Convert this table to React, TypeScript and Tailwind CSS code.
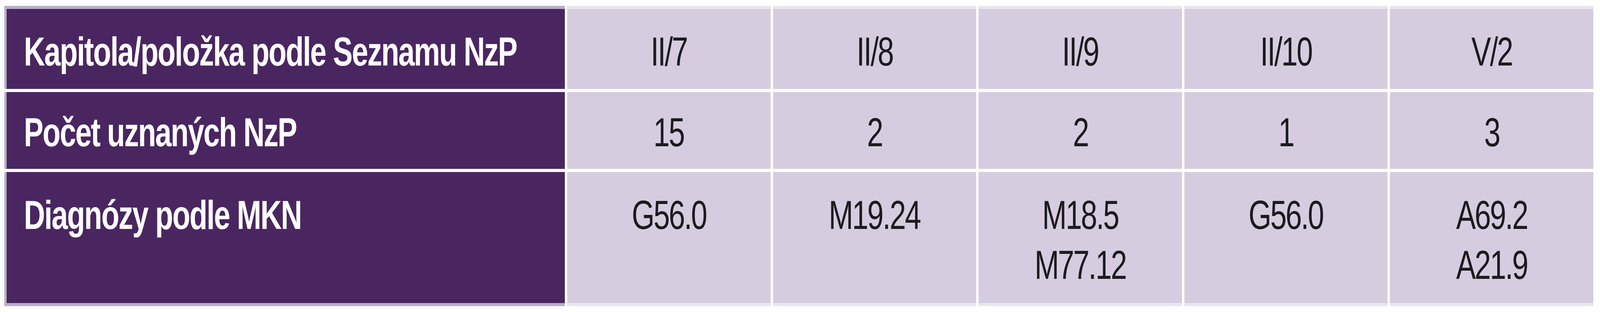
const columns = ["II/7", "II/8", "II/9", "II/10", "V/2"];

const rows: { label: string; values: string[][] }[] = [
  { label: "Kapitola/položka podle Seznamu NzP", values: columns.map((c) => [c]) },
  { label: "Počet uznaných NzP", values: [["15"], ["2"], ["2"], ["1"], ["3"]] },
  {
    label: "Diagnózy podle MKN",
    values: [["G56.0"], ["M19.24"], ["M18.5", "M77.12"], ["G56.0"], ["A69.2", "A21.9"]],
  },
];

// padding-top per row so the cap line lands where the reference has it
const rowPad = ["pt-[45px]", "pt-[39px]", "pt-[46px]"];

export default function App() {
  return (
    <div
      className="h-[800px] w-full overflow-hidden bg-white pl-[11px] pr-[17px] pt-[15px]"
      style={{ fontFamily: '"Liberation Sans", Arial, sans-serif' }}
    >
      <div className="grid grid-cols-[1435px_repeat(5,minmax(0,1fr))] grid-rows-[213px_197px_344px] gap-x-[6px] gap-y-[8px]">
        {rows.map((row, i) => {
          const first = i === 0;
          const last = i === rows.length - 1;
          return (
            <div key={row.label} className="contents">
              <div
                className={[
                  "border-l-[6px] border-[#b8aec6] bg-[#4a2661] pl-[44px] text-[104px] font-bold leading-[128px] whitespace-nowrap text-white",
                  first ? "border-t-[8px]" : "",
                  last ? "border-b-[8px]" : "",
                  rowPad[i],
                ].join(" ")}
              >
                <span className="inline-block origin-left scale-x-[0.7246] tracking-[-3px]">
                  {row.label}
                </span>
              </div>
              {row.values.map((lines, j) => (
                <div
                  key={j}
                  className={[
                    "flex flex-col items-center border-[#e9e6ed] bg-[#d5cddf] text-[104px] leading-[128px] whitespace-nowrap text-[#1c1a1e]",
                    first ? "border-t-[8px]" : "",
                    last ? "border-b-[8px]" : "",
                    rowPad[i],
                  ].join(" ")}
                >
                  {lines.map((l) => (
                    <span key={l} className="inline-block scale-x-[0.7246] tracking-[-4px]">
                      {l}
                    </span>
                  ))}
                </div>
              ))}
            </div>
          );
        })}
      </div>
    </div>
  );
}
